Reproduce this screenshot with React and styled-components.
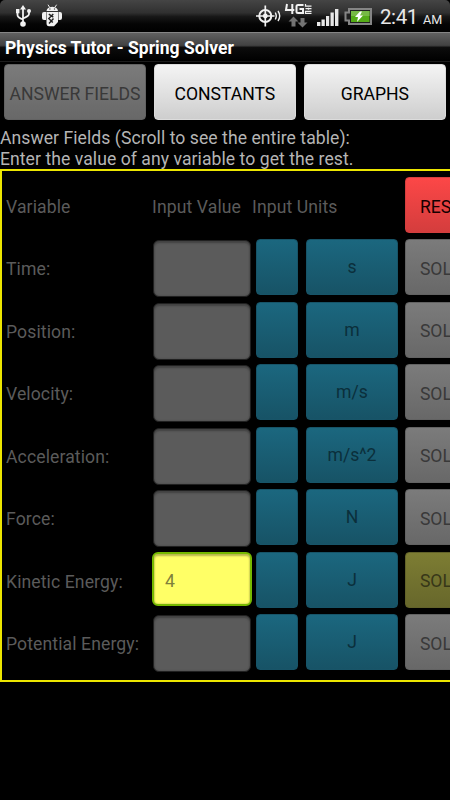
import React from "react";
import styled, { createGlobalStyle, css } from "styled-components";

const Global = createGlobalStyle`
  * { box-sizing: border-box; }
  html, body { margin: 0; background: #000; overflow: hidden; }
  body { font-family: Roboto, sans-serif; font-size: 17.6px; }
`;

const Screen = styled.main`
  width: 450px;
  height: 800px;
  overflow: hidden;
  background: #000;
`;

const StatusBar = styled.header`
  height: 32px;
  display: flex;
  justify-content: space-between;
  background: linear-gradient(#454545, #303030 40%, #171717 52%, #050505 75%, #000);
  border-radius: 5px 5px 0 0;
`;

const StatusGroup = styled.div`
  display: flex;
  height: 32px;
`;

const Clock = styled.time`
  width: 70px;
  color: #e8e8e8;
  font-size: 20.5px;
  line-height: 34px;
  white-space: nowrap;
  letter-spacing: -0.4px;
`;

const Meridiem = styled.span`
  font-size: 12.6px;
  margin-left: 5px;
  letter-spacing: 0.1px;
`;

const TitleBar = styled.h1`
  height: 30px;
  margin: 0;
  padding-left: 5px;
  border-top: 1px solid #858585;
  border-bottom: 1px solid #1c1c1c;
  background: linear-gradient(#606060, #424242 44%, #0c0c0c 52%, #000);
  color: #fff;
  font-size: 17.5px;
  font-weight: 700;
  line-height: 30px;
  white-space: nowrap;
`;

const tones = {
  light: css`background: linear-gradient(#f4f4f4, #cecece); color: #000; border-color: #dcdcdc;`,
  dim: css`background: linear-gradient(#7b7b7b, #686868); color: #393939; border-color: #626262;`,
  red: css`background: linear-gradient(#fc4747, #d43d3d); color: #160000; border-color: #d43e3e;`,
  teal: css`background: linear-gradient(#1b677f, #175366); color: #0b2f3b; border-color: #175468;`,
  olive: css`background: linear-gradient(#7d7d33, #67672b); color: #373718; border-color: #626229;`,
};

const Button = styled.button`
  flex: none;
  width: ${(p) => p.$width}px;
  height: 56px;
  padding: ${(p) => (p.$tone === "teal" ? "0" : "3px 0 0")};
  border: 1px solid;
  border-radius: 4px;
  font: 400 17.6px/20px Roboto, sans-serif;
  white-space: nowrap;
  ${(p) => tones[p.$tone]}
`;

const ActionButton = styled(Button)`
  width: 82px;
  margin-left: -0.6px;
  padding-left: 13.5px;
  text-align: left;
`;

const Tabs = styled.nav`
  display: flex;
  gap: 7.3px;
  padding: 2px 3px 0 3.6px;
  height: 66px;
`;

const TabButton = styled(Button)`
  width: 142.7px;
  letter-spacing: -0.04px;
`;

const Intro = styled.p`
  height: 41px;
  margin: 0;
  color: #b5b5b5;
  line-height: 21px;
  white-space: nowrap;
  letter-spacing: 0.05px;
`;

const Line = styled.span`
  display: block;
`;

const Table = styled.section`
  width: 600px;
  height: 513px;
  padding-top: 6px;
  border: 2px solid #ece600;
`;

const Row = styled.div`
  height: 62.45px;
  display: grid;
  grid-template-columns: 146px 100px 4px 50px 100px 110px;
  grid-template-rows: 58px;
  align-items: start;
  padding-left: 4px;
`;

const HeadRow = styled(Row)`
  grid-template-columns: 146px 100px 154px 110px;
`;

const Label = styled.span`
  color: #5b5b5b;
  line-height: 58px;
  padding-top: 1px;
  white-space: nowrap;
  letter-spacing: 0.1px;
`;

const Input = styled.div`
  width: 98px;
  height: 57px;
  margin: 1px 0 0 1px;
  border: 1px solid #202020;
  border-radius: 6px;
  background: #5b5b5b;
  box-shadow: inset 0 2px 2px #424242, inset 0 0 2px #424242;
`;

const ActiveInput = styled(Input)`
  width: 100px;
  height: 54px;
  margin: 0;
  padding-left: 11px;
  border: 2px solid #76b900;
  background: #ffff66;
  box-shadow: inset 0 2px 2px #b8b84b, inset 0 0 2px #a0a044;
  color: #80803b;
  line-height: 55px;
`;

const rows = [
  ["Time:", "s"],
  ["Position:", "m"],
  ["Velocity:", "m/s"],
  ["Acceleration:", "m/s^2"],
  ["Force:", "N"],
  ["Kinetic Energy:", "J", "4"],
  ["Potential Energy:", "J"],
];

const NotificationIcons = () => (
  <svg width="70" height="32" fill="#f2f2f2">
    <g fill="none" stroke="#f2f2f2" strokeWidth="1.8">
      <path d="M23 8v16M17.5 12v3q0 2.5 5.5 4.5M29 11v3q0 2-6 4.5" />
    </g>
    <path d="M23 5l-3 4.5h6zM16 9h3.4v4.2H16z" />
    <circle cx="29" cy="11" r="2" />
    <circle cx="23" cy="24" r="2.8" />
    <path d="M46.5 11q.5-4 5.7-4.3q5.3.3 5.8 4.3zM44 12h2v8h-2q-2 0-2-2v-4q0-2 2-2zM58.5 12h1.5q2 0 2 2v4q0 2-2 2h-1.5zM46.5 12h11.5v10l-4 4.3h-5q-2.5 0-2.5-3z" />
    <path d="M48 4.7l1.8 3m6.8-3l-2 3" stroke="#eee" />
    <path d="M49.3 9h1.2m3.4 0h1.2" stroke="#222" strokeWidth="1.2" />
    <path d="M48.8 14.2l4.5 3M53.3 14l-4.5 4.5 4 4M53.5 18.5l-4.5 5" fill="none" stroke="#222" strokeWidth="1.4" />
  </svg>
);

const SystemIcons = () => (
  <svg width="126" height="32" viewBox="254 0 126 32">
    <g fill="none" stroke="#f2f2f2">
      <circle cx="265.3" cy="16" r="6" strokeWidth="2" />
      <path d="M265.3 5.5v21M256 16h18.5" strokeWidth="1.7" />
      <path d="M275.3 12.5q2 3.5 0 7M278 11q3.4 5 0 10" strokeWidth="1.4" />
      <path d="M287 4l-1 6h8.3m-2-6v10M303.5 5h-5.5q-1.5 0-1.5 1.5v5q0 1.5 1.5 1.5h5V9H299.5" strokeWidth="2" />
      <path d="M305.5 4v2.2h6M305.5 8.7h6m-3-1v2M305.5 14v-2.7h6M305.5 13.4h6" strokeWidth="1.2" />
    </g>
    <circle cx="265.3" cy="16" r="2.4" fill="#f2f2f2" />
    <path d="M293.5 16.5l-5 5h3v5h4v-5h3zM300.5 18v4.5h-3l5 5 5-5h-3V18z" fill="#737373" />
    <g fill="#e8e8e8">
      <path d="M317 22h3.4v4H317zM321.5 19.5h3.3V26h-3.3zM326 16h3.2v10H326zM330.5 12.5h3.3V26h-3.3zM335 9h3.4v17H335z" />
    </g>
    <path d="M349 9h22v15h-22v-3.5h-3.5v-8h3.5z" fill="#202020" stroke="#858585" strokeWidth="2" />
    <path d="M351 11h18.5v11H351z" fill="#55ac17" />
    <path d="M351 11h18.5v5H351z" fill="#76b944" />
    <path d="M360 11.5l-5 5.5h3l-1 5 6-6.5h-3l2-4z" fill="#fff" />
  </svg>
);

export default function App() {
  return (
    <>
      <Global />
      <Screen>
        <StatusBar>
          <StatusGroup><NotificationIcons /></StatusGroup>
          <StatusGroup>
            <SystemIcons />
            <Clock>2:41<Meridiem>AM</Meridiem></Clock>
          </StatusGroup>
        </StatusBar>
        <TitleBar>Physics Tutor - Spring Solver</TitleBar>
        <Tabs>
          <TabButton $tone="dim">ANSWER FIELDS</TabButton>
          <TabButton $tone="light">CONSTANTS</TabButton>
          <TabButton $tone="light">GRAPHS</TabButton>
        </Tabs>
        <Intro>
          <Line>Answer Fields (Scroll to see the entire table):</Line>
          <Line>Enter the value of any variable to get the rest.</Line>
        </Intro>
        <Table>
          <HeadRow>
            <Label>Variable</Label>
            <Label>Input Value</Label>
            <Label>Input Units</Label>
            <ActionButton $tone="red">RESET</ActionButton>
          </HeadRow>
          {rows.map(([name, unit, value]) => (
            <Row key={name}>
              <Label>{name}</Label>
              {value ? <ActiveInput>{value}</ActiveInput> : <Input />}
              <span />
              <Button $tone="teal" $width={42} aria-label={`${name} unit options`} />
              <Button $tone="teal" $width={92}>{unit}</Button>
              <ActionButton $tone={value ? "olive" : "dim"}>SOLVE</ActionButton>
            </Row>
          ))}
        </Table>
      </Screen>
    </>
  );
}
